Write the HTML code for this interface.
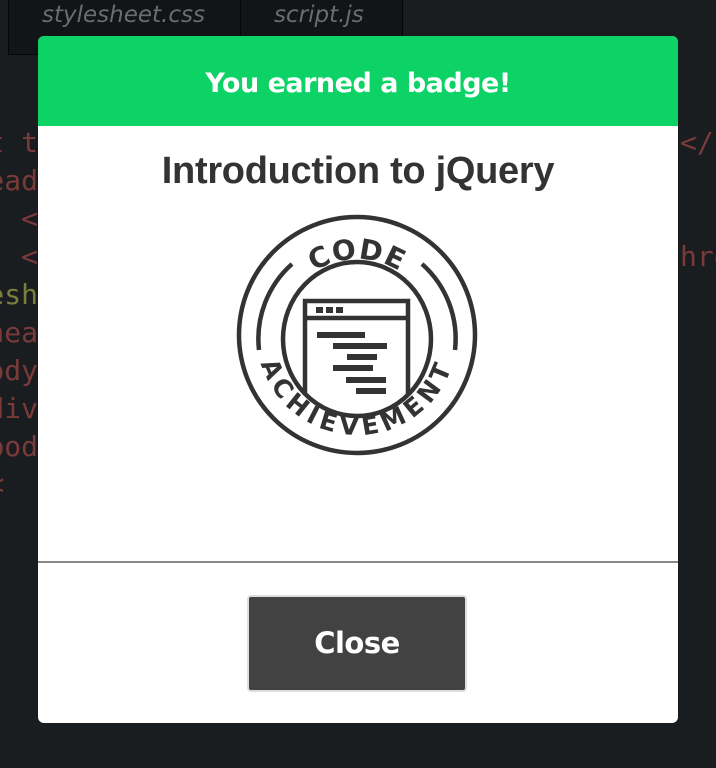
<!DOCTYPE html>
<html><head><meta charset="utf-8"><style>
*{margin:0;padding:0;box-sizing:border-box}
body{width:716px;height:768px;background:#1a1d20;position:relative;overflow:hidden;font-family:"Liberation Sans",sans-serif}
.tabs{position:absolute;left:8px;top:0;width:395px;height:55px;background:#121518;border:1px solid #050607;border-top:none}
.tab{position:absolute;top:0;height:54px;border-right:1px solid #050607;color:#6a6d70;font-style:italic;font-family:"DejaVu Sans","Liberation Sans",sans-serif;font-size:23px;padding-top:2px}
.c{position:absolute;font-family:"DejaVu Sans Mono","Liberation Mono",monospace;font-size:28px;color:#7a3a3a;white-space:pre;line-height:38px}
.modal{position:absolute;left:38px;top:36px;width:640px;height:687px;background:#fff;border-radius:6px;overflow:hidden}
.hd{height:90px;background:#0dd366;color:#fff;font-weight:bold;font-size:27px;text-align:center;line-height:96px;font-family:"DejaVu Sans","Liberation Sans",sans-serif;letter-spacing:-0.5px}
h1{position:absolute;top:114px;width:100%;text-align:center;font-size:38px;color:#333;font-weight:bold;letter-spacing:-0.3px}
.hr{position:absolute;top:525px;left:0;width:100%;height:2px;background:#888}
.btn{position:absolute;left:209px;top:559px;width:220px;height:97px;background:#424242;border:2px solid #ddd;border-radius:4px;color:#fff;font-weight:bold;font-size:29px;text-align:center;line-height:93px;font-family:"DejaVu Sans","Liberation Sans",sans-serif;letter-spacing:-0.5px}
</style></head><body>
<div class="tabs">
<div class="tab" style="left:0;width:232px;padding-left:33px">stylesheet.css</div>
<div class="tab" style="left:232px;width:162px;padding-left:33px">script.js</div>
</div>
<div class="c" style="right:678px;top:124px;text-align:right">t t
ead
  <
  <
<span style="color:#7a7d3c">esh</span>
hea
ody
div
bod
&lt;  </div>
<div class="c" style="left:680px;top:124px">&lt;/s


hre</div>
<div class="modal">
<div class="hd">You earned a badge!</div>
<h1>Introduction to jQuery</h1>
<svg style="position:absolute;left:0;top:0" width="640" height="687" viewBox="38 36 640 687">
<defs>
<clipPath id="ic"><ellipse cx="357" cy="339" rx="74" ry="77"/></clipPath>
<path id="top" d="M278 338 A79 79 0 0 1 436 338"/>
<path id="bot" d="M257 335 A100 100 0 0 0 457 335"/>
</defs>
<g fill="none" stroke="#333" stroke-width="4.5">
<circle cx="357" cy="335" r="118"/>
<ellipse cx="357" cy="339" rx="74" ry="77"/>
<path d="M292 264 A100 100 0 0 0 259 350"/>
<path d="M422 264 A100 100 0 0 1 455 350"/>
<g clip-path="url(#ic)">
<path d="M305 430 V301 H408 V430"/>
<line x1="305" y1="318" x2="408" y2="318"/>
</g>
</g>
<g fill="#333">
<rect x="316" y="307" width="7" height="6"/><rect x="326" y="307" width="7" height="6"/><rect x="336" y="307" width="7" height="6"/>
<rect x="317" y="332" width="48" height="6"/>
<rect x="333" y="343" width="54" height="6"/>
<rect x="347" y="354" width="30" height="6"/>
<rect x="333" y="365" width="40" height="6"/>
<rect x="346" y="377" width="40" height="6"/>
<rect x="356" y="388" width="30" height="6"/>
</g>
<text font-family="DejaVu Sans,Liberation Sans,sans-serif" font-weight="bold" font-size="28" fill="#333" letter-spacing="1"><textPath href="#top" startOffset="50%" text-anchor="middle">CODE</textPath></text>
<text font-family="DejaVu Sans,Liberation Sans,sans-serif" font-weight="bold" font-size="25" fill="#333" letter-spacing="5"><textPath href="#bot" startOffset="50%" text-anchor="middle">ACHIEVEMENT</textPath></text>
</svg>
<div class="hr"></div>
<div class="btn">Close</div>
</div>
</body></html>
